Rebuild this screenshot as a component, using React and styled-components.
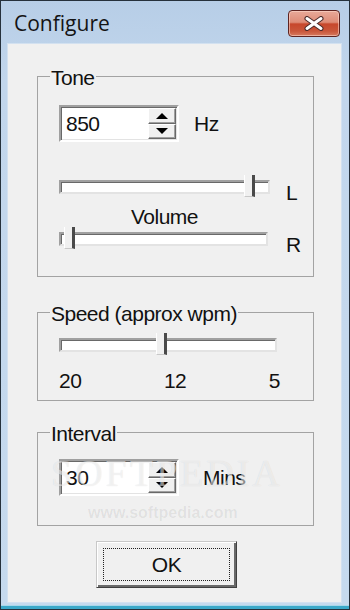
import React from "react";
import styled, { createGlobalStyle } from "styled-components";

const GlobalStyle = createGlobalStyle`
  html, body {
    margin: 0;
    padding: 0;
    background: #ffffff;
  }
  body {
    font-family: "Liberation Sans", Arial, sans-serif;
  }
`;

const Window = styled.div`
  width: 350px;
  height: 610px;
  box-sizing: border-box;
  display: flex;
  flex-direction: column;
  padding: 0 7px 6px 6px;
  border: 1px solid #26313c;
  background: linear-gradient(#b7cee7, #c2d6ec 80px, #c6daee);
  box-shadow: inset 0 -3px 0 #3ba8c9, inset 0 -4px 0 #a9d8ea;
`;

const TitleBar = styled.div`
  height: 42px;
  flex: none;
  display: flex;
  justify-content: space-between;
  align-items: flex-start;
`;

const Title = styled.div`
  margin: 8px 0 0 7px;
  font-family: "Open Sans", "DejaVu Sans", sans-serif;
  font-size: 21px;
  line-height: 28px;
  color: #141414;
`;

const CloseButton = styled.div`
  width: 52px;
  height: 27px;
  box-sizing: border-box;
  margin: 9px 2px 0 0;
  display: flex;
  align-items: center;
  justify-content: center;
  border: 1px solid #5e2421;
  border-radius: 4px;
  background: linear-gradient(#e8a999 0%, #de8c77 45%, #c7472c 52%, #c9563a 80%, #d67a5f 100%);
  box-shadow: inset 0 0 0 1px rgba(255, 220, 210, 0.55);
`;

const Client = styled.div`
  flex: 1;
  position: relative;
  display: flex;
  flex-direction: column;
  align-items: flex-start;
  padding: 19px 0 0 29px;
  background: #f0f0f0;
  border: 1px solid #d3e1f0;
  font-size: 21px;
  letter-spacing: -0.5px;
  color: #111;
`;

const Group = styled.fieldset`
  width: 277px;
  box-sizing: border-box;
  margin: ${p => p.$top}px 0 0 0;
  padding: 0;
  min-width: 0;
  border: 1px solid #a3a3a3;
`;

const Legend = styled.legend`
  margin-left: 12px;
  padding: 4px 1px 0 1px;
  line-height: 22px;
`;

const GroupBody = styled.div`
  display: flex;
  flex-direction: column;
  align-items: flex-start;
  padding: ${p => p.$pad};
`;

const SpinRow = styled.div`
  display: flex;
  align-items: center;
  gap: ${p => p.$gap}px;
  margin-bottom: ${p => p.$below || 0}px;
`;

const SpinBox = styled.div`
  width: 120px;
  height: 37px;
  box-sizing: border-box;
  display: flex;
  align-items: center;
  justify-content: space-between;
  background: #fff;
  border: 2px solid;
  border-color: #a0a0a0 #ffffff #ffffff #a0a0a0;
  box-shadow: inset 1px 1px 0 #696969, inset -1px -1px 0 #e3e3e3;
`;

const SpinValue = styled.span`
  padding-left: 5px;
  line-height: 22px;
`;

const SpinButtons = styled.div`
  display: flex;
  flex-direction: column;
  align-self: stretch;
  padding: 1px 1px 1px 0;
  width: 28px;
`;

const SpinButton = styled.div`
  flex: 1;
  display: flex;
  align-items: center;
  justify-content: center;
  background: #f0f0f0;
  border: 1px solid;
  border-color: #ffffff #696969 #696969 #ffffff;
  box-shadow: inset -1px -1px 0 #a0a0a0;
`;

const Arrow = styled.span`
  width: 0;
  height: 0;
  border-left: 6px solid transparent;
  border-right: 6px solid transparent;
  ${p => (p.$up ? "border-bottom: 6px solid #000;" : "border-top: 6px solid #000;")}
`;

const Unit = styled.span`
  line-height: 22px;
`;

const SliderRow = styled.div`
  display: flex;
  align-items: flex-start;
  gap: ${p => p.$gap || 16}px;
`;

const Track = styled.div`
  position: relative;
  width: ${p => p.$w}px;
  height: 14px;
  margin-top: 5px;
  box-sizing: border-box;
  background: #fff;
  border: 2px solid;
  border-color: #a0a0a0 #e3e3e3 #e3e3e3 #a0a0a0;
  box-shadow: inset 1px 1px 0 #696969;
`;

const Thumb = styled.div`
  position: absolute;
  top: -7px;
  width: 11px;
  height: 22px;
  box-sizing: border-box;
  background: #f0f0f0;
  border-left: 1px solid #ffffff;
  border-right: 3px solid #4a4a4a;
  border-bottom: 1px solid #c8c8c8;
`;

const SideLabel = styled.span`
  padding-top: 7px;
  line-height: 22px;
`;

const Caption = styled.div`
  width: ${p => p.$w}px;
  margin-top: 3px;
  text-align: center;
  line-height: 20px;
`;

const ScaleRow = styled.div`
  width: 221px;
  margin-top: 18px;
  display: flex;
  justify-content: space-between;
  line-height: 22px;
`;

const OkButton = styled.div`
  width: 141px;
  height: 47px;
  box-sizing: border-box;
  margin: 15px 0 0 59px;
  padding: 6px;
  background: #f0f0f0;
  border: 1px solid;
  border-color: #c8c8c8 #404040 #404040 #c8c8c8;
  box-shadow: inset 1px 1px 0 #ffffff, inset -2px -2px 0 #696969;
`;

const FocusRing = styled.div`
  height: 100%;
  box-sizing: border-box;
  display: flex;
  align-items: center;
  justify-content: center;
  border: 1px dotted #202020;
  line-height: 22px;
`;

const Watermark = styled.div`
  position: absolute;
  left: 43px;
  top: 407px;
  font-family: "Liberation Serif", serif;
  font-size: 38px;
  letter-spacing: 3px;
  color: rgba(255, 255, 255, 0.55);
  text-shadow: 0 0 1px rgba(0, 0, 0, 0.12);
  pointer-events: none;
`;

const WatermarkUrl = styled.div`
  position: absolute;
  left: 80px;
  top: 460px;
  font-family: "Liberation Sans", sans-serif;
  font-size: 16px;
  font-weight: bold;
  letter-spacing: 0;
  color: rgba(0, 0, 0, 0.07);
  pointer-events: none;
`;

const CloseGlyph = () => (
  <svg width="22" height="15" viewBox="0 0 22 15">
    <path d="M4 2.5 L18 12.5 M18 2.5 L4 12.5" stroke="#4a2a2a" strokeWidth="5" strokeLinecap="round" />
    <path d="M4 2.5 L18 12.5 M18 2.5 L4 12.5" stroke="#ffffff" strokeWidth="3" strokeLinecap="round" />
  </svg>
);

const Spin = ({ value }) => (
  <SpinBox>
    <SpinValue>{value}</SpinValue>
    <SpinButtons>
      <SpinButton>
        <Arrow $up />
      </SpinButton>
      <SpinButton>
        <Arrow />
      </SpinButton>
    </SpinButtons>
  </SpinBox>
);

const Slider = ({ width, pos }) => (
  <Track $w={width}>
    <Thumb style={{ left: pos }} />
  </Track>
);

export default function App() {
  return (
    <>
      <GlobalStyle />
      <Window>
        <TitleBar>
          <Title>Configure</Title>
          <CloseButton>
            <CloseGlyph />
          </CloseButton>
        </TitleBar>
        <Client>
          <Group $top={0}>
            <Legend>Tone</Legend>
            <GroupBody $pad="16px 0 20px 21px">
              <SpinRow $gap={15} $below={33}>
                <Spin value="850" />
                <Unit>Hz</Unit>
              </SpinRow>
              <SliderRow $gap={16}>
                <Slider width={211} pos={183} />
                <SideLabel>L</SideLabel>
              </SliderRow>
              <Caption $w={211}>Volume</Caption>
              <SliderRow $gap={18}>
                <Slider width={209} pos={3} />
                <SideLabel>R</SideLabel>
              </SliderRow>
            </GroupBody>
          </Group>

          <Group $top={22}>
            <Legend>Speed (approx wpm)</Legend>
            <GroupBody $pad="8px 0 8px 21px">
              <Slider width={218} pos={95} />
              <ScaleRow>
                <span>20</span>
                <span>12</span>
                <span>5</span>
              </ScaleRow>
            </GroupBody>
          </Group>

          <Group $top={18}>
            <Legend>Interval</Legend>
            <GroupBody $pad="14px 0 29px 21px">
              <SpinRow $gap={24}>
                <Spin value="30" />
                <Unit>Mins</Unit>
              </SpinRow>
            </GroupBody>
          </Group>

          <OkButton>
            <FocusRing>OK</FocusRing>
          </OkButton>

          <Watermark>SOFTPEDIA</Watermark>
          <WatermarkUrl>www.softpedia.com</WatermarkUrl>
        </Client>
      </Window>
    </>
  );
}
